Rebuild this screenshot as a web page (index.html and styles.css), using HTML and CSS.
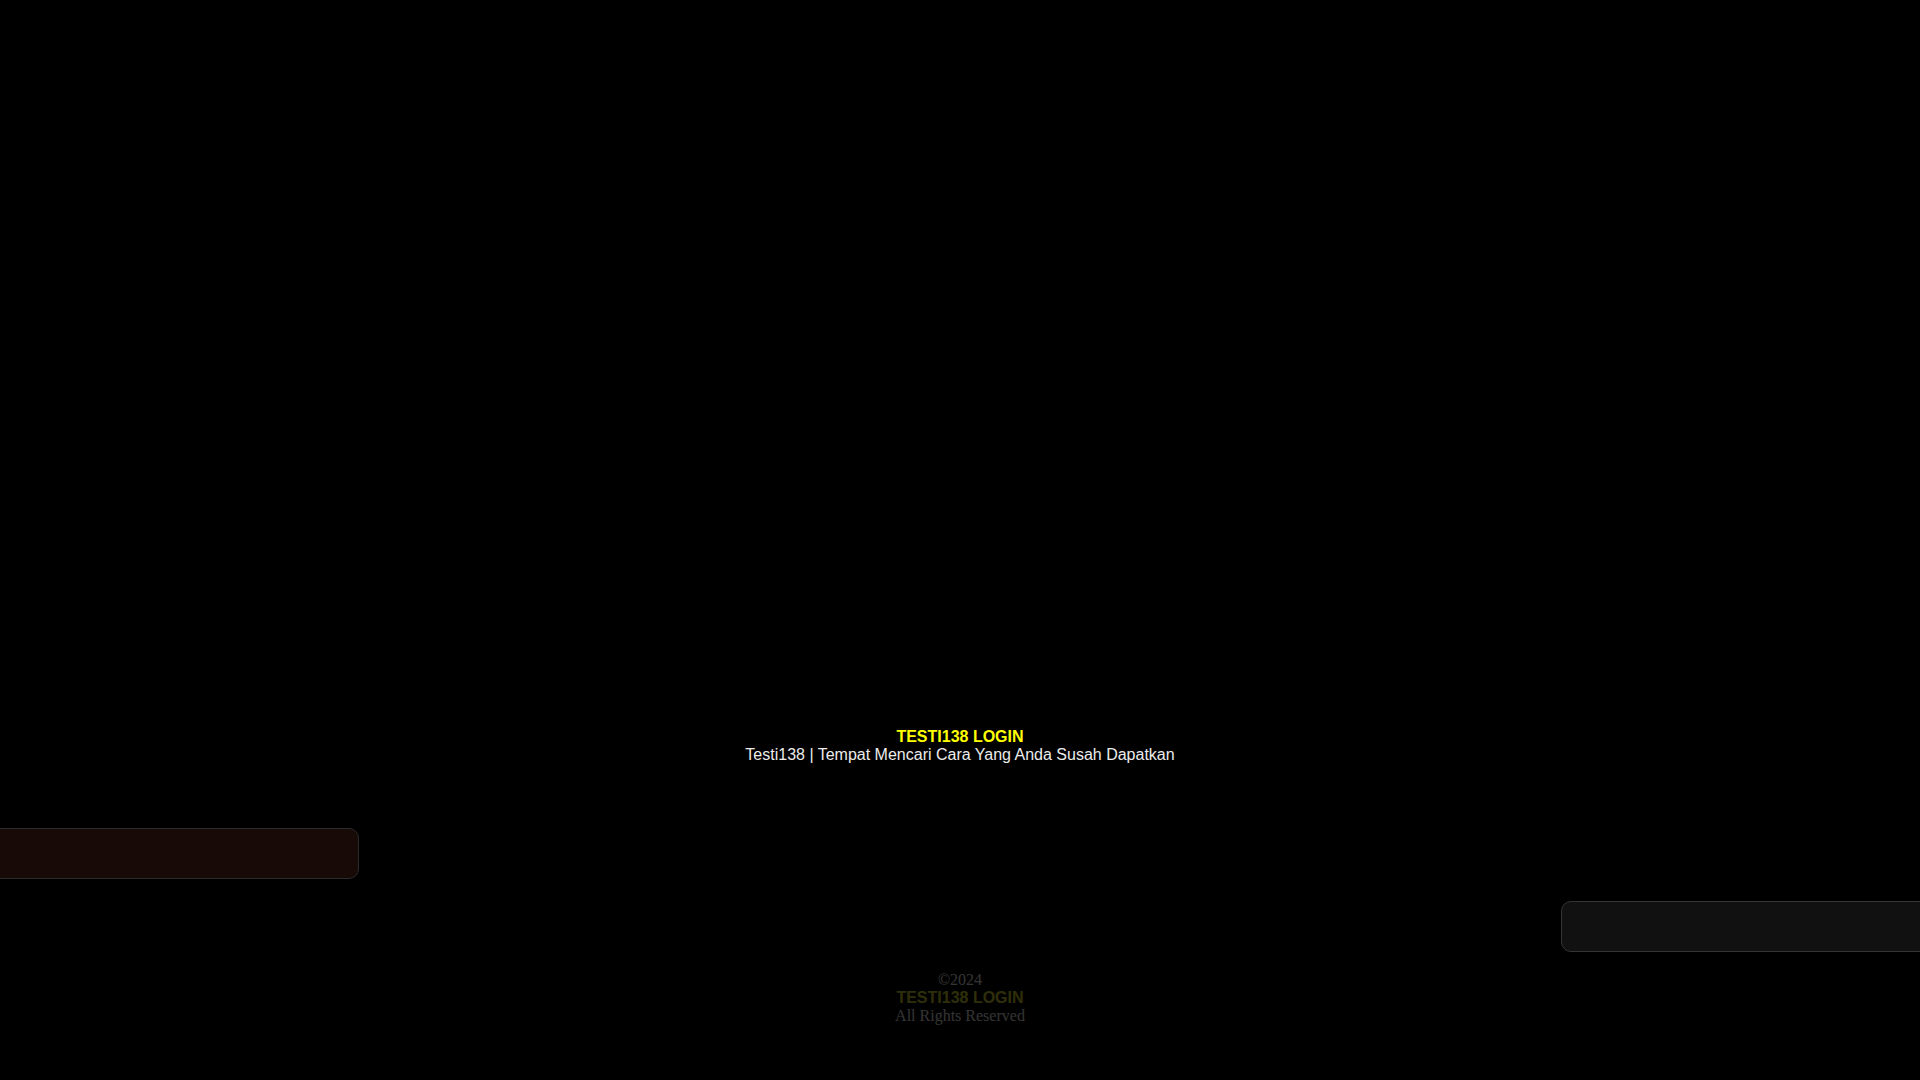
FILE: index.html
```html
<!DOCTYPE html>
<html lang="id">
<head>
<meta charset="utf-8">
<title>TESTI138 LOGIN</title>
<link rel="stylesheet" href="styles.css">
</head>
<body>
<div class="banner"></div>
<section class="intro">
  <h1 class="title">TESTI138 LOGIN</h1>
  <p class="subtitle">Testi138 | Tempat Mencari Cara Yang Anda Susah Dapatkan</p>
</section>
<div class="slides">
  <div class="slide slide-left"></div>
  <div class="slide slide-right"></div>
</div>
<footer class="footer">
  <div>©2024</div>
  <div class="brand">TESTI138 LOGIN</div>
  <div>All Rights Reserved</div>
</footer>
</body>
</html>
```
FILE: styles.css
```css
html, body {
  margin: 0;
  padding: 0;
  background: #000;
  overflow: hidden;
}
body {
  width: 1920px;
  height: 1080px;
}
.banner {
  height: 728px;
}
.intro {
  text-align: center;
  font-family: "Liberation Sans", Arial, sans-serif;
  font-size: 16px;
}
.title {
  margin: 0;
  font-size: 16px;
  font-weight: bold;
  color: #ffff00;
  line-height: 18px;
}
.subtitle {
  margin: 0;
  color: #ececec;
  line-height: 18px;
}
.slides {
  display: flex;
  flex-direction: column;
  gap: 22px;
  padding-top: 64px;
}
.slide {
  box-sizing: border-box;
  width: 400px;
  height: 51px;
  border-radius: 10px;
}
.slide-left {
  background: #170a07;
  border: 1px solid #2b2b2b;
  transform: translateX(-41px);
}
.slide-right {
  align-self: flex-end;
  background: #111;
  border: 1px solid #353535;
  transform: translateX(41px);
}
.footer {
  margin-top: 19px;
  text-align: center;
  font-family: "Liberation Serif", "Times New Roman", serif;
  font-size: 16px;
  line-height: 18px;
  color: #fff;
  opacity: 0.2;
}
.footer .brand {
  font-family: "Liberation Sans", Arial, sans-serif;
  font-weight: bold;
  color: #e6e632;
}
```
